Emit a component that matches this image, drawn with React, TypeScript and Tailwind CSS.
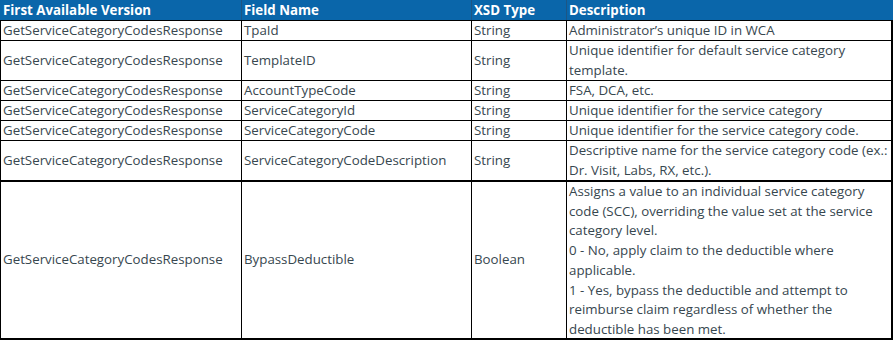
import React from "react";

type Row = { v: string; f: string; t: string; d: string[]; h: string; last?: boolean };

const rows: Row[] = [
  { v: "GetServiceCategoryCodesResponse", f: "TpaId", t: "String", d: ["Administrator\u2019s unique ID in WCA"], h: "h-[20px]" },
  { v: "GetServiceCategoryCodesResponse", f: "TemplateID", t: "String", d: ["Unique identifier for default service category", "template."], h: "h-[40px]" },
  { v: "GetServiceCategoryCodesResponse", f: "AccountTypeCode", t: "String", d: ["FSA, DCA, etc."], h: "h-[20px]" },
  { v: "GetServiceCategoryCodesResponse", f: "ServiceCategoryId", t: "String", d: ["Unique identifier for the service category"], h: "h-[20px]" },
  { v: "GetServiceCategoryCodesResponse", f: "ServiceCategoryCode", t: "String", d: ["Unique identifier for the service category code."], h: "h-[20px]" },
  { v: "GetServiceCategoryCodesResponse", f: "ServiceCategoryCodeDescription", t: "String", d: ["Descriptive name for the service category code (ex.:", "Dr. Visit, Labs, RX, etc.)."], h: "h-[40px]" },
  {
    v: "GetServiceCategoryCodesResponse",
    f: "BypassDeductible",
    t: "Boolean",
    d: [
      "Assigns a value to an individual service category",
      "code (SCC), overriding the value set at the service",
      "category level.",
      "0 - No, apply claim to the deductible where",
      "applicable.",
      "1 - Yes, bypass the deductible and attempt to",
      "reimburse claim regardless of whether the",
      "deductible has been met.",
    ],
    h: "h-[160px]",
    last: true,
  },
];

export default function App() {
  return (
    <div
      className="w-[894px] h-[341px] bg-white text-[13.3px] text-[#37474f]"
      style={{ fontFamily: '"Open Sans", sans-serif' }}
    >
      <div className="flex h-[20px] w-[893px] bg-[#0a66aa] text-white font-bold leading-[20px]">
        <div className="w-[242px] pl-[3px] border-r border-[#1d5684] whitespace-nowrap">First Available Version</div>
        <div className="w-[230px] pl-[2px] border-r border-[#1d5684] whitespace-nowrap">Field Name</div>
        <div className="w-[95px] pl-[2px] border-r border-[#1d5684] whitespace-nowrap">XSD Type</div>
        <div className="flex-1 pl-[2px] whitespace-nowrap">Description</div>
      </div>
      {rows.map((r, i) => (
        <div
          key={i}
          className={`flex w-[893px] ${r.h} border-l border-r-2 border-black ${r.last ? "border-t-2 border-b-2" : "border-t"}`}
        >
          <div className="w-[241px] pl-[2px] border-r border-black flex items-center whitespace-nowrap">{r.v}</div>
          <div className="w-[230px] pl-[2px] border-r border-black flex items-center whitespace-nowrap">{r.f}</div>
          <div className="w-[95px] pl-[2px] border-r border-black flex items-center whitespace-nowrap">{r.t}</div>
          <div className={`flex-1 pl-[2px] overflow-hidden whitespace-nowrap ${r.last ? "leading-[19.7px]" : "leading-[19.5px]"} ${r.d.length === 1 ? "flex items-center" : ""}`}>
            <div>
              {r.d.map((l, j) => (
                <div key={j}>{l}</div>
              ))}
            </div>
          </div>
        </div>
      ))}
    </div>
  );
}
